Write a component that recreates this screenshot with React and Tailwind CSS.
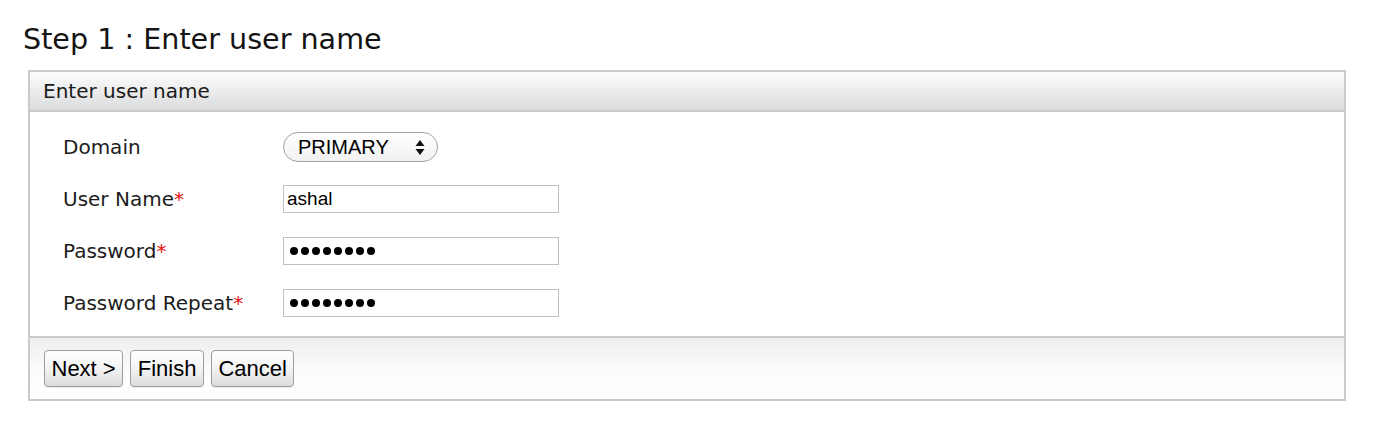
import React from "react";

const lucida = { fontFamily: '"DejaVu Sans", "Lucida Grande", sans-serif' };
const helv = { fontFamily: '"Liberation Sans", Arial, Helvetica, sans-serif' };

function Dots() {
  return (
    <div className="flex items-center gap-[3px] pl-[3px]">
      {Array.from({ length: 8 }).map((_, i) => (
        <span key={i} className="block w-[8px] h-[8px] rounded-full bg-black" />
      ))}
    </div>
  );
}

function Label({ children, required }) {
  return (
    <div className="w-[220px] text-[20px] text-[#1c1c1c] leading-none" style={lucida}>
      {children}
      {required && <span className="text-[#e8100f]">*</span>}
    </div>
  );
}

function TextBox({ children }) {
  return (
    <div
      className="w-[276px] h-[28px] border border-[#bfbfbf] bg-white flex items-center px-[3px] text-[19px] text-black"
      style={helv}
    >
      {children}
    </div>
  );
}

function Btn({ children }) {
  return (
    <button
      type="button"
      className="h-[37px] px-[6.5px] border border-[#9d9d9d] rounded-[4px] bg-gradient-to-b from-[#ffffff] via-[#f3f3f3] to-[#dcdcdc] text-[22px] text-black leading-none shadow-[0_1px_1px_rgba(0,0,0,0.08)]"
      style={helv}
    >
      {children}
    </button>
  );
}

export default function App() {
  return (
    <div className="w-[1374px] h-[442px] bg-white">
      <div
        className="pl-[23px] pt-[22px] text-[28.6px] leading-[34px] text-[#141414]"
        style={lucida}
      >
        Step 1 : Enter user name
      </div>
      <div className="ml-[28px] mt-[14px] w-[1318px] border-2 border-[#cacaca] bg-white">
        <div
          className="h-[40px] flex items-center pl-[13px] bg-gradient-to-b from-[#fcfcfc] to-[#dbdcdd] border-b-2 border-[#cacaca] text-[20px] text-[#1a1a1a] leading-none"
          style={lucida}
        >
          Enter user name
        </div>
        <div className="pl-[33px] pt-[9px] pb-[7px]">
          <div className="h-[52px] flex items-center">
            <Label>Domain</Label>
            <div className="w-[155px] h-[30px] rounded-full border-[1.5px] border-[#a3a3a3] bg-gradient-to-b from-[#ffffff] to-[#f1f1f1] flex items-center justify-between pl-[14px] pr-[12px]">
              <span className="text-[20px] text-black leading-none" style={helv}>
                PRIMARY
              </span>
              <svg width="10" height="17" viewBox="0 0 10 17">
                <path d="M5 1 L9.5 7 L0.5 7 Z" fill="#111" />
                <path d="M5 16 L9.5 10 L0.5 10 Z" fill="#111" />
              </svg>
            </div>
          </div>
          <div className="h-[52px] flex items-center">
            <Label required>User Name</Label>
            <TextBox>ashal</TextBox>
          </div>
          <div className="h-[52px] flex items-center">
            <Label required>Password</Label>
            <TextBox>
              <Dots />
            </TextBox>
          </div>
          <div className="h-[52px] flex items-center">
            <Label required>Password Repeat</Label>
            <TextBox>
              <Dots />
            </TextBox>
          </div>
        </div>
        <div className="h-[63px] border-t-2 border-[#cacaca] bg-gradient-to-b from-[#eeeeee] via-[#fbfbfb] to-[#ffffff] flex items-center gap-[7px] pl-[14px]">
          <Btn>Next &gt;</Btn>
          <Btn>Finish</Btn>
          <Btn>Cancel</Btn>
        </div>
      </div>
    </div>
  );
}
